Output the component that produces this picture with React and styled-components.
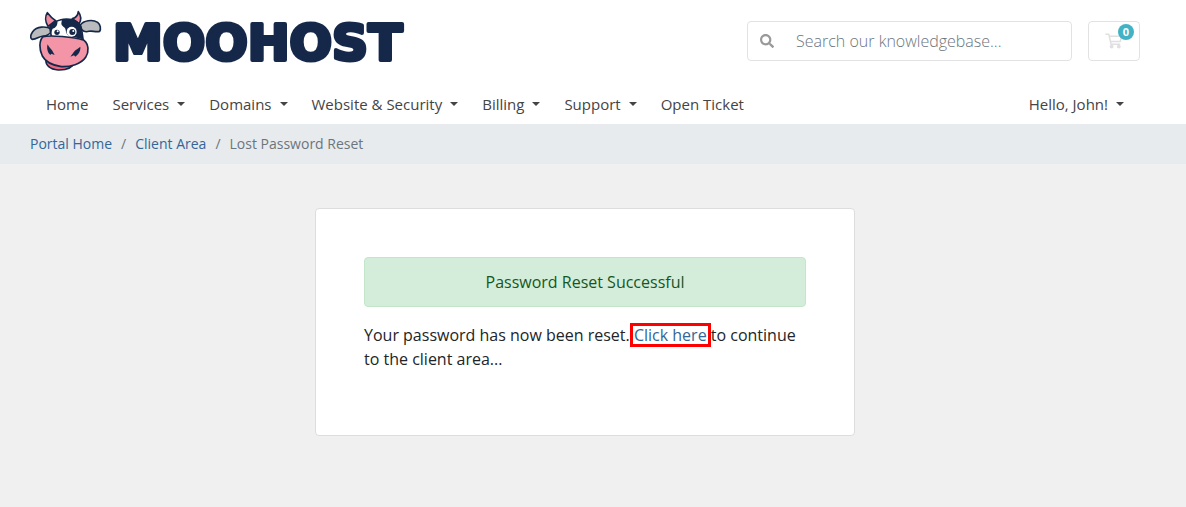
import React from "react";
import styled, { createGlobalStyle } from "styled-components";
import { FaSearch } from "react-icons/fa";

const GlobalStyle = createGlobalStyle`
  body {
    margin: 0;
    background: #f0f0f0;
    color: #212529;
    font-family: "Open Sans", "Liberation Sans", sans-serif;
    font-size: 16px;
    line-height: 24px;
  }

  a {
    color: #336699;
    text-decoration: none;
  }
`;

const Header = styled.header`
  background: #fff;
`;

const Gutter = styled.div`
  padding-right: 16px;
`;

const Container = styled.div`
  box-sizing: border-box;
  max-width: 1140px;
  margin: 0 auto;
  padding: 0 15px;
`;

const TopBar = styled(Container)`
  display: flex;
  align-items: center;
  gap: 16px;
  padding-top: 10px;
  padding-bottom: 10px;
`;

const Brand = styled.a`
  display: flex;
  align-items: center;
  gap: 8px;
  margin-right: auto;
`;

const BrandName = styled.text`
  fill: #152849;
  stroke: #152849;
  stroke-width: 4px;
  stroke-linejoin: round;
  font-family: "DejaVu Sans", sans-serif;
  font-size: 50px;
  font-weight: 700;
`;

const SearchForm = styled.form`
  box-sizing: border-box;
  display: flex;
  align-items: center;
  width: 325px;
  height: 40px;
  border: 1px solid #e2e2e2;
  border-radius: 4px;
`;

const SearchButton = styled.button`
  display: flex;
  padding: 0 12px;
  border: 0;
  background: none;
  color: #999;
  font-size: 14px;
`;

const SearchInput = styled.input`
  flex: 1;
  min-width: 0;
  padding: 0 10px;
  border: 0;
  outline: 0;
  background: none;
  font: inherit;
  font-weight: 300;

  &::placeholder {
    color: #6c757d;
    opacity: 1;
  }
`;

const CartLink = styled.a`
  position: relative;
  box-sizing: border-box;
  display: flex;
  align-items: center;
  justify-content: center;
  width: 52px;
  height: 40px;
  border: 1px solid #e2e2e2;
  border-radius: 4px;
  color: #e0e0e0;
`;

const Badge = styled.span`
  position: absolute;
  top: 2px;
  right: 5px;
  width: 16px;
  border-radius: 8px;
  background: #42b3c5;
  color: #fff;
  font-size: 11px;
  font-weight: 700;
  line-height: 16px;
  text-align: center;
`;

const NavBar = styled(Container).attrs({ as: "nav" })`
  display: flex;
  justify-content: space-between;
  padding-top: 6px;
  padding-bottom: 4px;
`;

const Menu = styled.ul`
  display: flex;
  margin: 0;
  padding: 0 4px;
  list-style: none;
`;

const MenuLink = styled.a`
  display: flex;
  align-items: center;
  gap: 8px;
  padding: 4px 12px;
  color: #444;
  font-size: 15px;
`;

const Caret = styled.span`
  border: 4px solid transparent;
  border-top-color: currentColor;
  border-bottom: 0;
`;

const BreadcrumbBar = styled.nav`
  background: #e7ebee;
`;

const Breadcrumb = styled(Container).attrs({ as: "ol" })`
  display: flex;
  padding-top: 8px;
  padding-bottom: 8px;
  list-style: none;
  font-size: 14px;
`;

const Crumb = styled.li`
  color: #6c757d;

  & + &::before {
    content: "/";
    padding: 0 9px;
  }
`;

const Card = styled.main`
  box-sizing: border-box;
  max-width: 540px;
  margin: 44px auto;
  padding: 48px;
  border: 1px solid #ddd;
  border-radius: 4px;
  background: #fff;
`;

const Alert = styled.div`
  padding: 12px 20px;
  border: 1px solid #c3e6cb;
  border-radius: 4px;
  background: #d4edda;
  color: #155724;
  text-align: center;
`;

const Message = styled.p`
  margin: 16px 0;
`;

const MarkedLink = styled.a`
  position: relative;

  &::after {
    content: "";
    position: absolute;
    inset: -1px -4px;
    border: 3px solid #f00;
  }
`;

const menuItems = [
  { label: "Home" },
  { label: "Services", dropdown: true },
  { label: "Domains", dropdown: true },
  { label: "Website & Security", dropdown: true },
  { label: "Billing", dropdown: true },
  { label: "Support", dropdown: true },
  { label: "Open Ticket" }
];

const MenuItem = ({ label, dropdown }) => (
  <li>
    <MenuLink href="#">
      {label}
      {dropdown && <Caret />}
    </MenuLink>
  </li>
);

const CowLogo = () => (
  <svg width="72" height="62" viewBox="30 30 216 186" aria-hidden="true">
    <g stroke="#152849" strokeWidth="5" strokeLinejoin="round" strokeLinecap="round">
      <path fill="#b9bbbd" d="M95 88C77 77 50 79 38 95C31 105 30 116 37 118C51 118 60 107 72 108C82 108 88 102 94 96Z" />
      <path fill="#b9bbbd" d="M181 75C190 62 217 57 233 67C242 74 243 88 239 94C226 97 216 91 207 94C198 97 190 94 185 89Z" />
      <path fill="#f08a9d" d="M84 79C76 66 74 49 82 38C88 46 94 55 107 62Z" />
      <path fill="#f08a9d" d="M157 56C169 53 174 44 175 35C184 47 184 60 177 72Z" />
      <path fill="#fff" d="M94 108C86 82 98 65 120 60C145 53 169 59 180 76C188 90 186 106 190 121L95 112Z" />
      <path fill="#f0677f" d="M78 178C76 196 90 208 114 210C139 211 157 203 164 188Z" />
      <path fill="#f495a7" d="M69 110C57 122 57 148 67 168C76 185 98 196 124 200C151 201 183 193 197 172C208 154 206 132 192 121C160 110 91 105 69 110Z" />
    </g>
    <g fill="#152849">
      <path d="M126 58C150 54 171 59 180 75C188 91 184 103 189 118C174 115 164 111 155 111C146 110 138 102 137 90C136 80 124 81 124 70Z" />
      <path d="M87 80C93 67 103 62 112 62C114 74 108 83 98 86C94 91 95 101 91 104Z" />
      <circle cx="155" cy="95" r="15" fill="#fff" />
      <circle cx="157" cy="96" r="9" />
      <circle cx="111" cy="97" r="8" />
      <circle cx="160" cy="93" r="3" fill="#fff" />
      <circle cx="113" cy="94" r="3" fill="#fff" />
      <path d="M83 133C87 142 92 145 96 151L104 165L94 161L91 165L86 160C81 151 80 140 83 133Z" />
      <path d="M181 140C175 145 167 149 162 155L151 170L162 166L166 170L174 163C180 156 182 147 181 140Z" />
    </g>
  </svg>
);

const CartIcon = () => (
  <svg
    width="18"
    height="16"
    viewBox="0 0 18 16"
    fill="none"
    stroke="currentColor"
    strokeWidth="1.5"
    strokeLinecap="round"
    strokeLinejoin="round"
    aria-hidden="true"
  >
    <path d="M1 1.2H3.8L6 11.2H14.6M4.2 3.2H16.6L15.2 8.6H5.4" />
    <circle cx="6.6" cy="13.6" r="1.2" fill="currentColor" />
    <circle cx="13.8" cy="13.6" r="1.2" fill="currentColor" />
  </svg>
);

const App = () => (
  <>
    <GlobalStyle />
    <Header>
      <Gutter>
        <TopBar>
          <Brand href="#">
            <CowLogo />
            <svg width="300" height="62">
              <BrandName x="3" y="50">
                MOOHOST
              </BrandName>
            </svg>
          </Brand>
          <SearchForm>
            <SearchButton type="submit" aria-label="Search">
              <FaSearch />
            </SearchButton>
            <SearchInput
              aria-label="Search our knowledgebase"
              placeholder="Search our knowledgebase..."
            />
          </SearchForm>
          <CartLink href="#">
            <CartIcon />
            <Badge>0</Badge>
          </CartLink>
        </TopBar>
        <NavBar>
          <Menu>
            {menuItems.map(item => (
              <MenuItem key={item.label} {...item} />
            ))}
          </Menu>
          <Menu>
            <MenuItem label="Hello, John!" dropdown />
          </Menu>
        </NavBar>
      </Gutter>
    </Header>
    <BreadcrumbBar>
      <Gutter>
        <Breadcrumb>
          <Crumb>
            <a href="#">Portal Home</a>
          </Crumb>
          <Crumb>
            <a href="#">Client Area</a>
          </Crumb>
          <Crumb>Lost Password Reset</Crumb>
        </Breadcrumb>
      </Gutter>
    </BreadcrumbBar>
    <Gutter>
      <Card>
        <Alert role="alert">Password Reset Successful</Alert>
        <Message>
          Your password has now been reset. <MarkedLink href="#">Click here</MarkedLink> to
          continue to the client area...
        </Message>
      </Card>
    </Gutter>
  </>
);

export default App;
